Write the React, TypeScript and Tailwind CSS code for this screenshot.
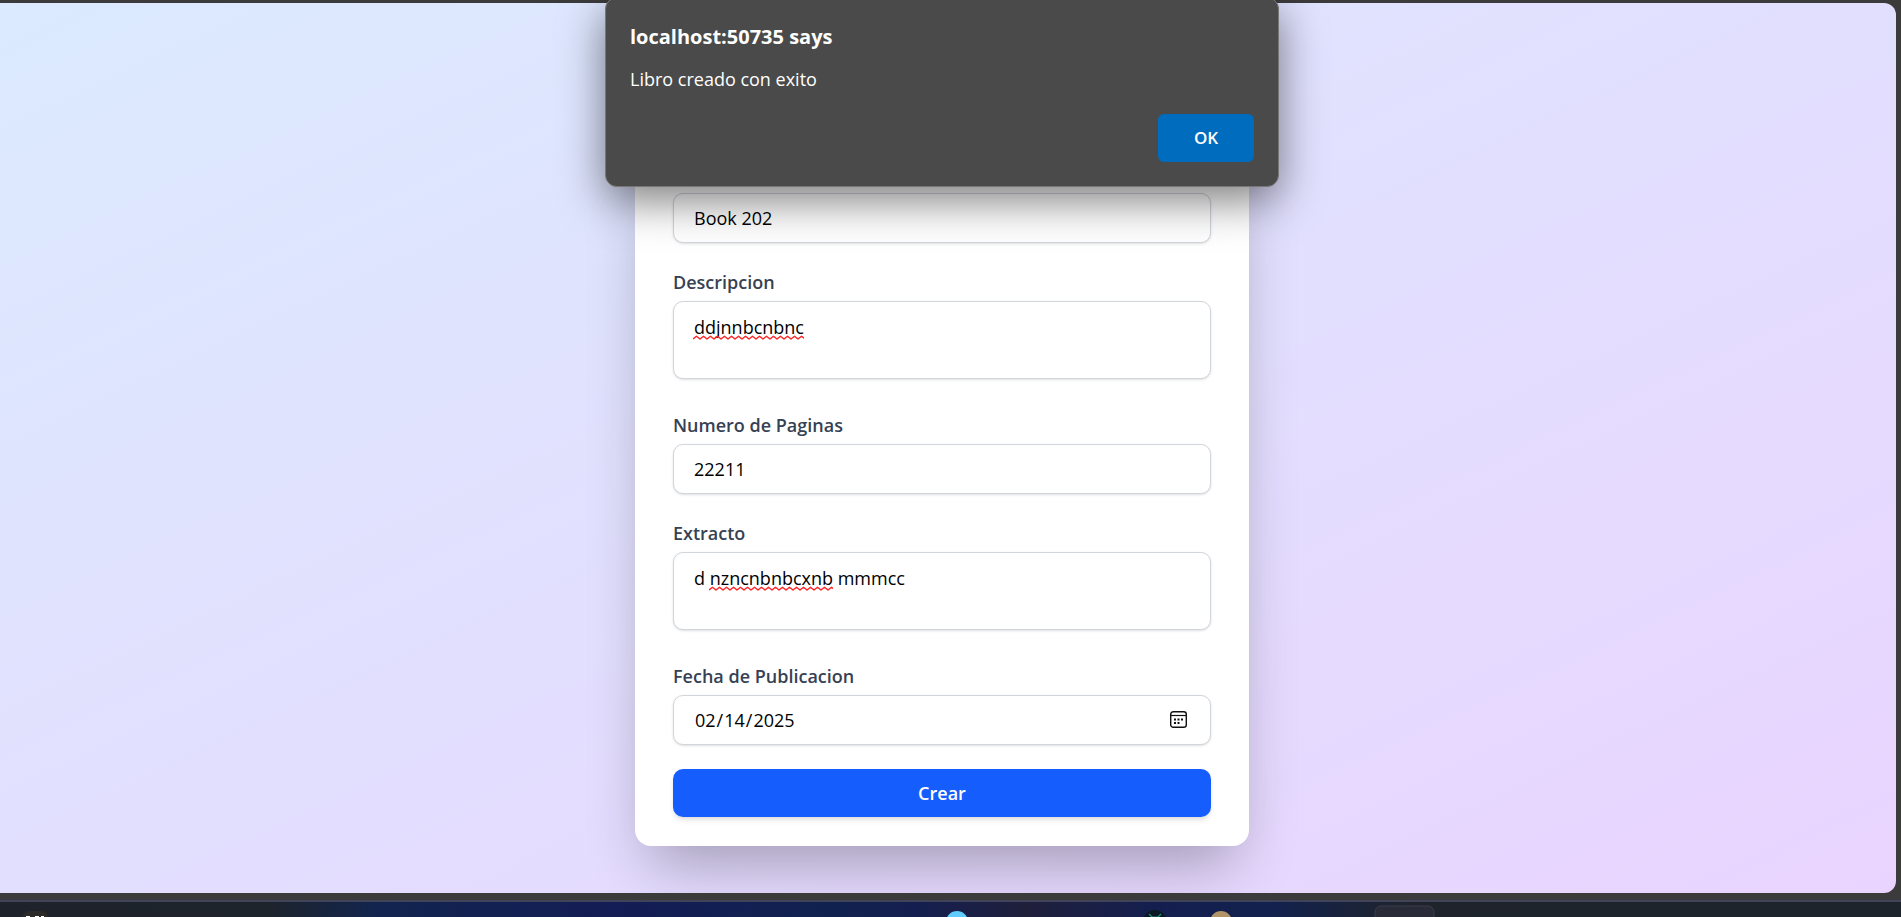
import { useId, type ReactNode } from "react";

const control =
  "block w-full rounded-[10px] border border-[#d1d5dc] bg-white px-5 text-[18px] leading-7 text-black shadow-sm outline-none";

function Field({ label, children }: { label: string; children: (id: string) => ReactNode }) {
  const id = useId();
  return (
    <div>
      <label htmlFor={id} className="mb-[3px] block text-[18px] leading-[31px] font-semibold text-[#364153]">
        {label}
      </label>
      <div className="relative">{children(id)}</div>
    </div>
  );
}

function Squiggle({ width, className }: { width: number; className: string }) {
  let d = "M0 4";
  for (let x = 0; x < width; x += 7) d += "l3.5 -2.8l3.5 2.8";
  return (
    <svg aria-hidden="true" width={width} height="6" className={`pointer-events-none absolute ${className}`}>
      <path d={d} fill="none" stroke="#f22" strokeWidth="1.4" strokeLinejoin="round" />
    </svg>
  );
}

function CalendarIcon() {
  return (
    <svg aria-hidden="true" viewBox="0 0 17 17" className="pointer-events-none absolute top-4 right-6 size-[17px]">
      <rect x="0.7" y="0.7" width="15.6" height="15.6" rx="2.6" fill="none" stroke="#111" strokeWidth="1.4" />
      <path d="M1 4.5h15" stroke="#111" strokeWidth="1.2" />
      <path d="M4 7.5h2v2H4zM7.5 7.5h2v2h-2zM11 7.5h2v2h-2zM4 11h2v2H4zM7.5 11h2v2h-2z" fill="#111" />
    </svg>
  );
}

function AlertDialog() {
  return (
    <div
      role="alertdialog"
      aria-labelledby="alert-title"
      aria-describedby="alert-message"
      className="absolute top-[-6px] left-1/2 w-[674px] max-w-full -translate-x-1/2 rounded-xl border border-[#777] bg-[#4a4a4a] px-6 pt-[25px] pb-6 text-white shadow-[0_14px_44px_rgba(0,0,0,0.5)]"
    >
      <h2 id="alert-title" className="text-[20px] leading-7 font-bold">
        localhost:50735 says
      </h2>
      <p id="alert-message" className="mt-[14px] text-[18px] leading-7">
        Libro creado con exito
      </p>
      <div className="mt-[21px] flex justify-end">
        <button type="button" className="h-12 w-24 rounded-md bg-[#006cbe] text-[17px] font-semibold">
          OK
        </button>
      </div>
    </div>
  );
}

function Taskbar() {
  return (
    <footer className="mt-[6px] h-[17px] overflow-hidden border-t-2 border-[#40435a] bg-[linear-gradient(90deg,#1e232b_0%,#1e242c_14%,#12244f_20%,#141d55_32%,#10214f_44%,#141f50_48%,#1f1f3b_54%,#141f50_61%,#12214d_67%,#1f242c_74%,#1e242c_100%)]">
      <svg aria-hidden="true" className="block h-[15px] w-full">
        <rect x="22" y="9" width="26" height="20" rx="8" fill="#2d2b29" />
        <path d="M26 15h4M35 15h4M41 15h3" stroke="#fff" strokeWidth="2" />
        <circle cx="957" cy="20" r="11" fill="#60cdff" />
        <circle cx="1155" cy="20" r="12" fill="#0b1a22" />
        <path d="M1149 12l3 3h6l3-3" stroke="#1e8f83" strokeWidth="1.2" fill="none" />
        <circle cx="1221" cy="20" r="11" fill="#b39468" />
        <rect x="1375" y="4" width="59" height="40" rx="6" fill="#292c38" stroke="#3a3d49" />
      </svg>
    </footer>
  );
}

export default function App() {
  return (
    <div className="flex min-h-screen flex-col bg-[#3b3b3b] pt-[3px] font-['Open_Sans','Noto_Sans',sans-serif]">
      <main className="relative mr-[5px] flex flex-1 flex-col justify-end rounded-r-xl bg-linear-to-br from-[#dbeafe] to-[#e9d4ff] pr-3 pb-[47px]">
        <form
          className="mx-auto flex w-full max-w-[614px] flex-col gap-6 rounded-2xl bg-white px-[38px] pt-8 pb-[29px] shadow-[0_30px_60px_-14px_rgba(0,0,0,0.3)]"
          onSubmit={(e) => e.preventDefault()}
        >
          <input aria-label="Titulo" defaultValue="Book 202" className={`${control} h-[50px]`} />
          <Field label="Descripcion">
            {(id) => (
              <>
                <textarea id={id} defaultValue="ddjnnbcnbnc" className={`${control} mb-[7px] h-[78px] resize-none pt-[11px]`} />
                <Squiggle width={111} className="top-[34px] left-5" />
              </>
            )}
          </Field>
          <Field label="Numero de Paginas">
            {(id) => <input id={id} inputMode="numeric" defaultValue="22211" className={`${control} h-[50px]`} />}
          </Field>
          <Field label="Extracto">
            {(id) => (
              <>
                <textarea id={id} defaultValue="d nzncnbnbcxnb mmmcc" className={`${control} mb-[7px] h-[78px] resize-none pt-[11px]`} />
                <Squiggle width={124} className="top-[34px] left-9" />
              </>
            )}
          </Field>
          <Field label="Fecha de Publicacion">
            {(id) => (
              <>
                <input
                  id={id}
                  type="date"
                  defaultValue="2025-02-14"
                  className={`${control} h-[50px] [&::-webkit-calendar-picker-indicator]:opacity-0`}
                />
                <CalendarIcon />
              </>
            )}
          </Field>
          <button type="submit" className="h-12 rounded-[10px] bg-[#155dfc] text-[18px] font-semibold text-white shadow-md">
            Crear
          </button>
        </form>
        <div className="absolute inset-x-0 top-0 mr-3">
          <AlertDialog />
        </div>
      </main>
      <div className="relative bg-[#3b3b3b] pt-px">
        <Taskbar />
      </div>
    </div>
  );
}
